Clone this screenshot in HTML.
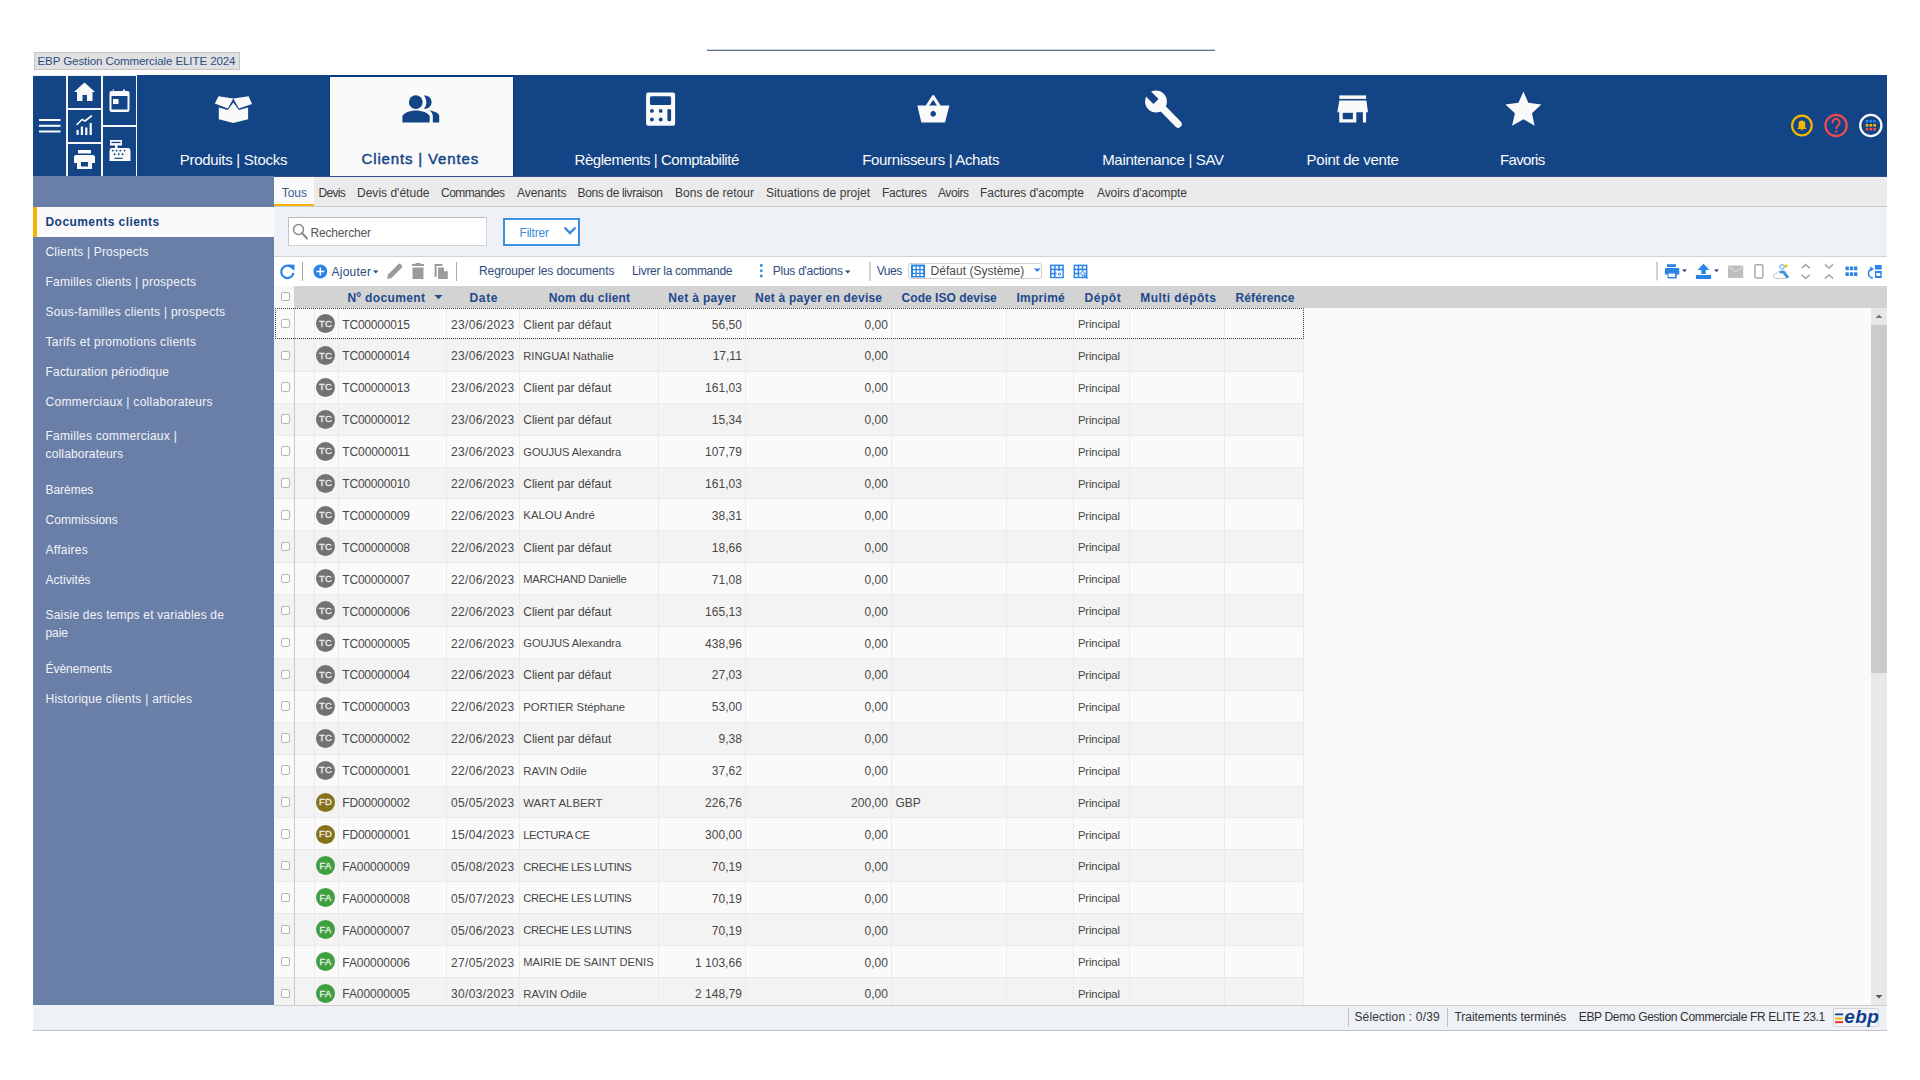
<!DOCTYPE html><html><head><meta charset="utf-8"><style>
*{box-sizing:border-box;margin:0;padding:0}
html,body{width:1920px;height:1080px;overflow:hidden;background:#fff;font-family:"Liberation Sans",sans-serif;position:relative}
.t{position:absolute;white-space:nowrap}
.r{position:absolute}
svg{position:absolute;overflow:visible}
</style></head><body>
<div class="r" style="left:34px;top:52px;width:206px;height:18px;background:#e0e0e0;border:1px solid #c4c4c4;"></div>
<div class="t" style="font-size:11.5px;line-height:11.5px;color:#2b4d82;top:55.77px;letter-spacing:-0.076px;left:37.50px;">EBP Gestion Commerciale ELITE 2024</div>
<div class="r" style="left:707px;top:49px;width:508px;height:1px;background:#c8d8ee;"></div>
<div class="r" style="left:707px;top:50px;width:508px;height:1px;background:#6a6d72;"></div>
<div class="r" style="left:33px;top:75px;width:1854px;height:101px;background:#134486;"></div>
<div class="r" style="left:33px;top:75px;width:104px;height:1px;background:#e8edf5;"></div>
<div class="r" style="left:33px;top:175.5px;width:104px;height:1px;background:#e8edf5;"></div>
<div class="r" style="left:66px;top:75px;width:2px;height:101px;background:#f4f6fa;"></div>
<div class="r" style="left:101px;top:75px;width:2px;height:101px;background:#f4f6fa;"></div>
<div class="r" style="left:136px;top:75px;width:1px;height:101px;background:#f4f6fa;"></div>
<div class="r" style="left:68px;top:107.5px;width:33px;height:2.5px;background:#f4f6fa;"></div>
<div class="r" style="left:68px;top:141.5px;width:33px;height:2.5px;background:#f4f6fa;"></div>
<div class="r" style="left:103px;top:124.5px;width:33px;height:2.5px;background:#f4f6fa;"></div>
<div class="r" style="left:330px;top:75px;width:182.5px;height:101px;background:#fafafa;"></div>
<div class="r" style="left:329px;top:75px;width:184.5px;height:2px;background:#0a3b80;"></div>
<div class="r" style="left:329px;top:75px;width:1px;height:101px;background:#0a3b80;"></div>
<div class="r" style="left:512.5px;top:75px;width:1px;height:101px;background:#0a3b80;"></div>
<svg style="left:0;top:0" width="1" height="1"><g fill="#fafafa"><rect x="39" y="119" width="21.5" height="2" /><rect x="39" y="124.8" width="21.5" height="2"/><rect x="39" y="130.5" width="21.5" height="2"/><path d="M84.5 82.5 L95 92 L92.5 92 L92.5 101 L87 101 L87 95 L82.5 95 L82.5 101 L77 101 L77 92 L74 92 Z"/><path d="M112 89.5 h2 v1.5 h9 v-1.5 h2 v1.5 h2.5 a2 2 0 0 1 2 2 v17 a2 2 0 0 1 -2 2 h-16 a2 2 0 0 1 -2 -2 v-17 a2 2 0 0 1 2 -2 h2.5 z M111.5 96 v13.5 h16 v-13.5 z"/><rect x="113" y="99" width="5.5" height="5"/><rect x="76.5" y="130" width="2.2" height="5"/><rect x="80.8" y="126.5" width="2.2" height="8.5"/><rect x="85.2" y="127.5" width="2.2" height="7.5"/><rect x="89.6" y="123" width="2.2" height="12"/><path d="M77 124.5 L82 119.5 L85 121 L91.5 116" fill="none" stroke="#fafafa" stroke-width="1.6" stroke-linecap="round" stroke-linejoin="round"/><rect x="78" y="150" width="13" height="3.5"/><path d="M76 155 h17 a2 2 0 0 1 2 2 v6 h-3 v6 h-15 v-6 h-3 v-6 a2 2 0 0 1 2 -2 z M81 162 v4.5 h7 v-4.5 z"/><rect x="110" y="140" width="12" height="5.5"/><rect x="115" y="145" width="2.5" height="3.5"/><path d="M111.5 148 h17 a1.5 1.5 0 0 1 1.4 1 l0.6 1.5 v10.5 h-21 v-10.5 l0.6 -1.5 a1.5 1.5 0 0 1 1.4 -1 z"/></g><g fill="#134486"><rect x="111.5" y="141.8" width="9" height="1.3"/><circle cx="112.8" cy="150.6" r="0.95"/><circle cx="116.5" cy="150.6" r="0.95"/><circle cx="120.3" cy="150.6" r="0.95"/><circle cx="124.5" cy="150.6" r="0.95"/><circle cx="114.6" cy="154.2" r="0.95"/><circle cx="118.7" cy="154.2" r="0.95"/><circle cx="122.6" cy="154.2" r="0.95"/><rect x="114.5" y="157.7" width="8" height="1.2"/></g></svg>
<svg style="left:0;top:0" width="1" height="1"><g fill="#fafafa"><path d="M214.8 103.5 L218.5 96.3 L233.3 98.4 L227.8 108.6 Z"/><path d="M233.3 98.4 L248.6 96.3 L252 104 L238.9 108.6 Z"/><path d="M218.8 107.5 L227.8 110 L233.3 102.6 L238.9 110 L248.1 107.5 L248.1 119.3 L233.3 123 L218.8 119.3 Z"/><path fill-rule="evenodd" d="M648.1 92.4 h25 a2 2 0 0 1 2 2 v29.3 a2 2 0 0 1 -2 2 h-25 a2 2 0 0 1 -2 -2 v-29.3 a2 2 0 0 1 2 -2 z M651.5 96.3 a1.5 1.5 0 0 0 -1.5 1.5 v5.6 a1.5 1.5 0 0 0 1.5 1.5 h18.1 a1.5 1.5 0 0 0 1.5 -1.5 v-5.6 a1.5 1.5 0 0 0 -1.5 -1.5 z"/></g><g fill="#134486"><circle cx="651.9" cy="110.9" r="1.9"/><circle cx="660.7" cy="110.9" r="1.9"/><circle cx="651.9" cy="119.5" r="1.9"/><circle cx="660.7" cy="119.5" r="1.9"/><rect x="667.4" y="109.1" width="3.7" height="12.2" rx="1.5"/></g><g fill="#fafafa"><path fill-rule="evenodd" d="M917.3 105.4 L925.8 105.4 L932 95.8 a1.4 1.4 0 0 1 2.4 0 L940.6 105.4 L949.4 105.4 L945 122.5 L921.4 122.5 Z M929.3 105.4 L937 105.4 L933.2 99.8 Z M933.2 111.1 a2.8 2.8 0 1 0 0.01 0 Z"/></g><g fill="#fafafa"><circle cx="1156" cy="101.5" r="10.9"/><path d="M1156 101.5 L1178 124" stroke="#fafafa" stroke-width="7.4" stroke-linecap="round"/></g><path d="M1158.55 98.95 L1153.45 104.05 L1140.5 91 L1145.6 85.9 Z" fill="#134486"/><g fill="#fafafa"><rect x="1339.3" y="95.4" width="26.8" height="3.5"/><path d="M1339.3 100.5 L1366.4 100.5 L1368 112.3 L1337.4 112.3 Z"/><path fill-rule="evenodd" d="M1339.3 112 h17 v10.5 h-17 z M1342.7 112.8 v6.5 h10.2 v-6.5 z"/><rect x="1362.9" y="112" width="3.2" height="10.5"/></g><g fill="#fafafa"><path d="M1523.5 91.5 L1528.3 102.8 L1541.3 104.4 L1532 113.2 L1534.6 125.7 L1523.5 119.3 L1512.1 125.7 L1514.9 113.2 L1505.4 104.4 L1518.4 102.8 Z"/></g><g fill="#134486"><circle cx="415.8" cy="102.1" r="6.9"/><path d="M423.9 95.6 a6.6 6.6 0 1 1 0 13 a9.5 9.5 0 0 0 0 -13 z"/><path d="M402.4 116 C403.5 112.8 410 110.4 416 110.4 C422 110.4 428.5 112.8 429.7 116 L429.7 122.5 L402.4 122.5 Z"/><path d="M429.5 110.6 C434 111.3 438.8 113 439.2 115.5 L439.2 122.5 L432.8 122.5 L432.8 116 C432.6 113.8 431.3 111.8 429.5 110.6 Z"/></g></svg>
<div class="t" style="font-size:15px;line-height:15px;color:#fafafa;top:151.60px;letter-spacing:-0.28px;left:179.70px;">Produits | Stocks</div>
<div class="t" style="font-size:15px;line-height:15px;color:#134486;top:151.30px;letter-spacing:0.843px;left:361.60px;-webkit-text-stroke:0.45px #134486;">Clients | Ventes</div>
<div class="t" style="font-size:15px;line-height:15px;color:#fafafa;top:151.60px;letter-spacing:-0.452px;left:574.50px;">Règlements | Comptabilité</div>
<div class="t" style="font-size:15px;line-height:15px;color:#fafafa;top:151.60px;letter-spacing:-0.343px;left:862.30px;">Fournisseurs | Achats</div>
<div class="t" style="font-size:15px;line-height:15px;color:#fafafa;top:151.60px;letter-spacing:-0.32px;left:1102.20px;">Maintenance | SAV</div>
<div class="t" style="font-size:15px;line-height:15px;color:#fafafa;top:151.60px;letter-spacing:-0.279px;left:1306.60px;">Point de vente</div>
<div class="t" style="font-size:15px;line-height:15px;color:#fafafa;top:151.60px;letter-spacing:-0.644px;left:1500.00px;">Favoris</div>
<svg style="left:0;top:0" width="1" height="1"><circle cx="1801.9" cy="125.5" r="9.8" fill="none" stroke="#f6b700" stroke-width="2.2"/><path d="M1801.9 120.5 a3.3 3.3 0 0 1 3.3 3.3 v3.5 l1.6 1.8 h-9.8 l1.6 -1.8 v-3.5 a3.3 3.3 0 0 1 3.3 -3.3 z M1800.8 129.3 h2.2 v1 h-2.2z" fill="#f6b700"/><circle cx="1836.1" cy="125.5" r="10.6" fill="none" stroke="#f04a4a" stroke-width="2.3"/><path d="M1832.5 122.5 a3.6 3.6 0 1 1 5.5 3 c-1.2 0.8 -1.6 1.5 -1.6 2.8" fill="none" stroke="#f04a4a" stroke-width="2" stroke-linecap="round"/><circle cx="1836.2" cy="131.5" r="1.2" fill="#f04a4a"/><circle cx="1870.8" cy="125.5" r="10.6" fill="none" stroke="#fafafa" stroke-width="2.3"/><g fill="#2d8ff0"><rect x="1865.8" y="120" width="2.4" height="2.4"/><rect x="1869.6" y="120" width="2.4" height="2.4"/><rect x="1873.4" y="120" width="2.4" height="2.4"/></g><g fill="#f6b700"><rect x="1865.8" y="124" width="2.6" height="2.6"/><rect x="1869.6" y="124" width="2.6" height="2.6"/><rect x="1873.4" y="124" width="2.6" height="2.6"/></g><g fill="#f04a4a"><rect x="1865.8" y="128" width="2.6" height="2.6"/><rect x="1869.6" y="128" width="2.6" height="2.6"/><rect x="1873.4" y="128" width="2.6" height="2.6"/></g></svg>
<div class="r" style="left:33px;top:176px;width:241px;height:829px;background:#6a7fa8;"></div>
<div class="r" style="left:33px;top:207px;width:241px;height:30px;background:#fafafa;"></div>
<div class="r" style="left:33px;top:207px;width:4px;height:30px;background:#f3b300;"></div>
<div class="t" style="font-size:12px;line-height:12px;color:#173f7e;top:215.64px;font-weight:bold;letter-spacing:0.44px;left:45.50px;">Documents clients</div>
<div class="t" style="font-size:12px;line-height:12px;color:#f2f4f8;top:246.14px;letter-spacing:0.177px;left:45.50px;">Clients | Prospects</div>
<div class="t" style="font-size:12px;line-height:12px;color:#f2f4f8;top:275.64px;letter-spacing:0.247px;left:45.50px;">Familles clients | prospects</div>
<div class="t" style="font-size:12px;line-height:12px;color:#f2f4f8;top:305.64px;letter-spacing:0.26px;left:45.50px;">Sous-familles clients | prospects</div>
<div class="t" style="font-size:12px;line-height:12px;color:#f2f4f8;top:335.64px;letter-spacing:0.313px;left:45.50px;">Tarifs et promotions clients</div>
<div class="t" style="font-size:12px;line-height:12px;color:#f2f4f8;top:365.64px;letter-spacing:0.195px;left:45.50px;">Facturation périodique</div>
<div class="t" style="font-size:12px;line-height:12px;color:#f2f4f8;top:395.64px;letter-spacing:0.29px;left:45.50px;">Commerciaux | collaborateurs</div>
<div class="t" style="font-size:12px;line-height:12px;color:#f2f4f8;top:430.34px;letter-spacing:0.259px;left:45.50px;">Familles commerciaux |</div>
<div class="t" style="font-size:12px;line-height:12px;color:#f2f4f8;top:447.84px;letter-spacing:0.162px;left:45.50px;">collaborateurs</div>
<div class="t" style="font-size:12px;line-height:12px;color:#f2f4f8;top:484.24px;letter-spacing:-0.038px;left:45.50px;">Barèmes</div>
<div class="t" style="font-size:12px;line-height:12px;color:#f2f4f8;top:514.34px;letter-spacing:0.03px;left:45.50px;">Commissions</div>
<div class="t" style="font-size:12px;line-height:12px;color:#f2f4f8;top:544.34px;letter-spacing:0.261px;left:45.50px;">Affaires</div>
<div class="t" style="font-size:12px;line-height:12px;color:#f2f4f8;top:574.24px;letter-spacing:0.054px;left:45.50px;">Activités</div>
<div class="t" style="font-size:12px;line-height:12px;color:#f2f4f8;top:609.24px;letter-spacing:0.182px;left:45.50px;">Saisie des temps et variables de</div>
<div class="t" style="font-size:12px;line-height:12px;color:#f2f4f8;top:626.64px;letter-spacing:-0.06px;left:45.50px;">paie</div>
<div class="t" style="font-size:12px;line-height:12px;color:#f2f4f8;top:663.14px;letter-spacing:-0.021px;left:45.50px;">Évènements</div>
<div class="t" style="font-size:12px;line-height:12px;color:#f2f4f8;top:693.14px;letter-spacing:0.262px;left:45.50px;">Historique clients | articles</div>
<div class="r" style="left:274px;top:176px;width:1613px;height:30px;background:#ebebeb;"></div>
<div class="r" style="left:274px;top:205.5px;width:1613px;height:1px;background:#c9c9c9;"></div>
<div class="r" style="left:274px;top:176px;width:40px;height:30px;background:#fafafa;"></div>
<div class="r" style="left:274px;top:176px;width:1613px;height:1px;background:#2f4f8a;"></div>
<div class="r" style="left:274px;top:204px;width:40px;height:2px;background:#f3b300;"></div>
<div class="t" style="font-size:12px;line-height:12px;color:#3a5b8c;top:186.84px;letter-spacing:-0.05px;left:281.80px;">Tous</div>
<div class="t" style="font-size:12px;line-height:12px;color:#3b3b3b;top:186.84px;letter-spacing:-0.675px;left:318.50px;">Devis</div>
<div class="t" style="font-size:12px;line-height:12px;color:#3b3b3b;top:186.84px;letter-spacing:0.014px;left:357.00px;">Devis d&#x27;étude</div>
<div class="t" style="font-size:12px;line-height:12px;color:#3b3b3b;top:186.84px;letter-spacing:-0.505px;left:441.00px;">Commandes</div>
<div class="t" style="font-size:12px;line-height:12px;color:#3b3b3b;top:186.84px;letter-spacing:-0.047px;left:517.00px;">Avenants</div>
<div class="t" style="font-size:12px;line-height:12px;color:#3b3b3b;top:186.84px;letter-spacing:-0.367px;left:577.50px;">Bons de livraison</div>
<div class="t" style="font-size:12px;line-height:12px;color:#3b3b3b;top:186.84px;letter-spacing:0.022px;left:675.00px;">Bons de retour</div>
<div class="t" style="font-size:12px;line-height:12px;color:#3b3b3b;top:186.84px;letter-spacing:0.066px;left:766.00px;">Situations de projet</div>
<div class="t" style="font-size:12px;line-height:12px;color:#3b3b3b;top:186.84px;letter-spacing:-0.24px;left:882.00px;">Factures</div>
<div class="t" style="font-size:12px;line-height:12px;color:#3b3b3b;top:186.84px;letter-spacing:-0.424px;left:938.00px;">Avoirs</div>
<div class="t" style="font-size:12px;line-height:12px;color:#3b3b3b;top:186.84px;letter-spacing:-0.059px;left:980.00px;">Factures d&#x27;acompte</div>
<div class="t" style="font-size:12px;line-height:12px;color:#3b3b3b;top:186.84px;letter-spacing:-0.096px;left:1097.00px;">Avoirs d&#x27;acompte</div>
<div class="r" style="left:274px;top:206.5px;width:1613px;height:50px;background:#eef1f5;"></div>
<div class="r" style="left:274px;top:256px;width:1613px;height:1px;background:#d2d2d2;"></div>
<div class="r" style="left:287.5px;top:217px;width:199px;height:28.5px;background:#fff;border:1px solid #d4d4d4;border-top-color:#b9b9b9;border-left-color:#c2c2c2;"></div>
<svg style="left:0;top:0" width="1" height="1"><circle cx="298.5" cy="229.5" r="5" fill="none" stroke="#8a8a8a" stroke-width="1.5"/><path d="M302 233 L307 238.5" stroke="#8a8a8a" stroke-width="2" stroke-linecap="round"/></svg>
<div class="t" style="font-size:12px;line-height:12px;color:#555;top:226.84px;letter-spacing:-0.171px;left:310.50px;">Rechercher</div>
<div class="r" style="left:503.3px;top:217.5px;width:77.2px;height:28px;background:#fff;border:2px solid #3f8ee0;"></div>
<div class="t" style="font-size:12px;line-height:12px;color:#3c8ad8;top:226.84px;letter-spacing:-0.193px;left:519.50px;">Filtrer</div>
<svg style="left:0;top:0" width="1" height="1"><path d="M564.5 227.5 L570 233 L575.5 227.5" fill="none" stroke="#3c8ad8" stroke-width="2.4"/></svg>
<div class="r" style="left:274px;top:257px;width:1613px;height:29px;background:#fff;"></div>
<div class="r" style="left:274px;top:285.5px;width:1613px;height:1px;background:#e6e6e6;"></div>
<svg style="left:0;top:0" width="1" height="1"><path d="M292.3 268 A6.2 6.2 0 1 0 293.5 273" fill="none" stroke="#2a84e6" stroke-width="2.2"/><path d="M288 264.5 L294.6 264.7 L294.3 271 Z" fill="#2a84e6"/><rect x="302" y="262" width="1" height="19" fill="#a8a8a8"/><circle cx="320.3" cy="271.5" r="6.9" fill="#2a84e6"/><path d="M320.3 267.5 v8 M316.3 271.5 h8" stroke="#fff" stroke-width="1.6"/><path d="M373 270.5 h5.5 l-2.75 3 z" fill="#2d4b7b"/><path d="M387 279 L388 274.5 L398.5 264 a1.4 1.4 0 0 1 2 0 L402 265.5 a1.4 1.4 0 0 1 0 2 L391.5 278 Z" fill="#9b9b9b"/><rect x="412" y="264" width="12" height="2" fill="#9b9b9b"/><rect x="415.5" y="263" width="5" height="1.5" fill="#9b9b9b"/><rect x="412.5" y="267.5" width="11" height="11.5" fill="#9b9b9b"/><path d="M434.6 264 h8 v2 h-6 v11 h-2 z" fill="#9b9b9b"/><path d="M438 267.5 h6 l3.75 3.75 v7.75 h-9.75 z" fill="#9b9b9b"/><path d="M444 267.5 v3.75 h3.75" fill="#fff"/><rect x="456" y="262" width="1" height="19" fill="#a8a8a8"/><circle cx="761.3" cy="265.5" r="1.4" fill="#2a84e6"/><circle cx="761.3" cy="270.8" r="1.4" fill="#2a84e6"/><circle cx="761.3" cy="276" r="1.4" fill="#2a84e6"/><path d="M845 270.5 h5.5 l-2.75 3 z" fill="#2d4b7b"/><rect x="869.5" y="262" width="1" height="19" fill="#a8a8a8"/></svg>
<div class="t" style="font-size:12px;line-height:12px;color:#2d4b7b;top:265.84px;letter-spacing:0.232px;left:331.50px;">Ajouter</div>
<div class="t" style="font-size:12px;line-height:12px;color:#2d4b7b;top:265.14px;letter-spacing:-0.091px;left:479.00px;">Regrouper les documents</div>
<div class="t" style="font-size:12px;line-height:12px;color:#2d4b7b;top:265.14px;letter-spacing:-0.282px;left:631.90px;">Livrer la commande</div>
<div class="t" style="font-size:12px;line-height:12px;color:#2d4b7b;top:265.14px;letter-spacing:-0.268px;left:772.80px;">Plus d&#x27;actions</div>
<div class="t" style="font-size:12px;line-height:12px;color:#2d4b7b;top:265.14px;letter-spacing:-0.47px;left:876.70px;">Vues</div>
<div class="r" style="left:907.7px;top:263px;width:134px;height:16px;background:#fff;border:1px solid #cfcfcf;border-radius:2px;"></div>
<div class="t" style="font-size:12px;line-height:12px;color:#4a4a4a;top:265.14px;letter-spacing:0.029px;left:930.50px;">Défaut (Système)</div>
<svg style="left:0;top:0" width="1" height="1"><g fill="#2a84e6"><rect x="911" y="264.5" width="14" height="13"/></g><g fill="#fff"><rect x="913" y="266.5" width="2.5" height="2.5"/><rect x="916.8" y="266.5" width="2.5" height="2.5"/><rect x="920.6" y="266.5" width="2.5" height="2.5"/><rect x="913" y="270.3" width="2.5" height="2.5"/><rect x="916.8" y="270.3" width="2.5" height="2.5"/><rect x="920.6" y="270.3" width="2.5" height="2.5"/><rect x="913" y="274" width="2.5" height="2"/><rect x="916.8" y="274" width="2.5" height="2"/><rect x="920.6" y="274" width="2.5" height="2"/></g><path d="M1034 268.5 h6.5 l-3.25 3.5 z" fill="#2a84e6"/><rect x="1050" y="264.6" width="13.8" height="13.6" fill="#2a84e6"/><g fill="#fff"><rect x="1051.5" y="266.1" width="2.6" height="2.6"/><rect x="1055.6" y="266.1" width="2.6" height="2.6"/><rect x="1059.7" y="266.1" width="2.6" height="2.6"/><rect x="1051.5" y="270.2" width="2.6" height="2.6"/><rect x="1055.6" y="270.2" width="2.6" height="2.6"/><rect x="1059.7" y="270.2" width="2.6" height="2.6"/><rect x="1051.5" y="274.3" width="2.6" height="2.6"/><rect x="1055.6" y="274.3" width="2.6" height="2.6"/><rect x="1059.7" y="274.3" width="2.6" height="2.6"/></g><circle cx="1059.5" cy="274" r="3" fill="#fff"/><circle cx="1059.5" cy="274" r="1.6" fill="#2a84e6"/><circle cx="1059.5" cy="274" r="0.7" fill="#fff"/><rect x="1073.6" y="264.6" width="13.8" height="13.6" fill="#2a84e6"/><g fill="#fff"><rect x="1075.1" y="266.1" width="2.6" height="2.6"/><rect x="1079.2" y="266.1" width="2.6" height="2.6"/><rect x="1083.3" y="266.1" width="2.6" height="2.6"/><rect x="1075.1" y="270.2" width="2.6" height="2.6"/><rect x="1079.2" y="270.2" width="2.6" height="2.6"/><rect x="1083.3" y="270.2" width="2.6" height="2.6"/><rect x="1075.1" y="274.3" width="2.6" height="2.6"/><rect x="1079.2" y="274.3" width="2.6" height="2.6"/><rect x="1083.3" y="274.3" width="2.6" height="2.6"/></g><circle cx="1082.5" cy="273.5" r="2.8" fill="#fff"/><circle cx="1082.5" cy="273.5" r="1.8" fill="none" stroke="#2a84e6" stroke-width="1"/><path d="M1084 275 L1087.5 278.5" stroke="#2a84e6" stroke-width="1.5"/><rect x="1656.5" y="262" width="1" height="18.5" fill="#a8a8a8"/><g fill="#2a84e6"><rect x="1667" y="264.2" width="9" height="2.8"/><path d="M1665.5 268 h12.5 a1.3 1.3 0 0 1 1.3 1.3 v5.2 h-2.6 v3.9 h-9.2 v-3.9 h-2.6 v-5.2 a1.3 1.3 0 0 1 1.3 -1.3 z"/></g><rect x="1668.5" y="273.5" width="6.5" height="3.5" fill="#fff"/><path d="M1682 269.5 h5 l-2.5 2.6 z" fill="#17386b"/><g fill="#2a84e6"><path d="M1703.5 263.8 L1709.5 270 h-3.8 v4 h-4.4 v-4 h-3.8 z"/><rect x="1695.9" y="275" width="15.2" height="4"/></g><path d="M1714 269.5 h5 l-2.5 2.6 z" fill="#17386b"/><rect x="1728" y="265.5" width="15.2" height="12.4" fill="#bdbdbd"/><path d="M1728.5 266.5 L1735.6 272 L1742.7 266.5" fill="none" stroke="#e6e6e6" stroke-width="1"/><rect x="1755" y="264.8" width="7.8" height="13.2" rx="1.3" fill="none" stroke="#a9a9a9" stroke-width="1.5"/><path d="M1775.2 278.6 a2.4 2.4 0 0 1 1.2 -4.8 a3.8 3.8 0 0 1 6.8 -0.6 a2.6 2.6 0 0 1 1.8 5.4 z" fill="#fdfdfd" stroke="#b5b5b5" stroke-width="0.8"/><path d="M1779.3 271.6 Q1781.5 270 1784.3 270.6 L1789.2 277 L1786.8 278.8 L1783 273.5 Q1781 273 1779.8 273.5 Z" fill="#3f92e3"/><circle cx="1782" cy="266.9" r="2.4" fill="#d4ebfa" stroke="#67a9e3" stroke-width="0.9"/><circle cx="1786" cy="265.8" r="1.6" fill="#f6be18"/><path d="M1801.6 268.2 L1805.7 264.6 L1809.8 268.2 M1801.6 274.8 L1805.7 278.4 L1809.8 274.8" fill="none" stroke="#a8a8a8" stroke-width="1.6"/><path d="M1824.9 264.4 L1829 268 L1833.1 264.4 M1824.9 278.6 L1829 275 L1833.1 278.6" fill="none" stroke="#a8a8a8" stroke-width="1.6"/><g fill="#2a84e6"><rect x="1845.5" y="266.5" width="3.3" height="3.7"/><rect x="1849.8" y="266.5" width="3.3" height="3.7"/><rect x="1854" y="266.5" width="3.3" height="3.7"/><rect x="1845.5" y="272.3" width="3.3" height="3.7"/><rect x="1849.8" y="272.3" width="3.3" height="3.7"/><rect x="1854" y="272.3" width="3.3" height="3.7"/></g><g fill="#2a84e6"><rect x="1875" y="265" width="6.7" height="4.5"/><rect x="1875" y="271" width="6.7" height="7"/></g><rect x="1876.3" y="273" width="4" height="3" fill="#fff"/><path d="M1872 269 a4.5 4.5 0 0 0 -3.5 4.5 a4.5 4.5 0 0 0 4.5 4.5" fill="none" stroke="#2a84e6" stroke-width="1.5"/><path d="M1870 266.5 L1874 269 L1870.5 271.5 z" fill="#2a84e6"/></svg>
<div class="r" style="left:274px;top:286px;width:1613px;height:22px;background:#d3d3d3;"></div>
<div class="r" style="left:274px;top:286px;width:20px;height:22px;background:#f8f8f8;"></div>
<div class="r" style="left:280.5px;top:291.5px;width:9.5px;height:9.5px;border:1.2px solid #b0b0b0;border-radius:2px;background:#fff"></div>
<div class="t" style="font-size:12px;line-height:12px;color:#21498c;top:291.84px;font-weight:bold;letter-spacing:0.379px;left:347.50px;">Nº document</div>
<div class="t" style="font-size:12px;line-height:12px;color:#21498c;top:291.84px;font-weight:bold;letter-spacing:0.663px;left:469.50px;">Date</div>
<div class="t" style="font-size:12px;line-height:12px;color:#21498c;top:291.84px;font-weight:bold;letter-spacing:0.158px;left:548.75px;">Nom du client</div>
<div class="t" style="font-size:12px;line-height:12px;color:#21498c;top:291.84px;font-weight:bold;letter-spacing:0.329px;left:668.25px;">Net à payer</div>
<div class="t" style="font-size:12px;line-height:12px;color:#21498c;top:291.84px;font-weight:bold;letter-spacing:0.208px;left:755.10px;">Net à payer en devise</div>
<div class="t" style="font-size:12px;line-height:12px;color:#21498c;top:291.84px;font-weight:bold;letter-spacing:0.035px;left:901.60px;">Code ISO devise</div>
<div class="t" style="font-size:12px;line-height:12px;color:#21498c;top:291.84px;font-weight:bold;letter-spacing:0.287px;left:1016.40px;">Imprimé</div>
<div class="t" style="font-size:12px;line-height:12px;color:#21498c;top:291.84px;font-weight:bold;letter-spacing:0.577px;left:1084.40px;">Dépôt</div>
<div class="t" style="font-size:12px;line-height:12px;color:#21498c;top:291.84px;font-weight:bold;letter-spacing:0.441px;left:1140.30px;">Multi dépôts</div>
<div class="t" style="font-size:12px;line-height:12px;color:#21498c;top:291.84px;font-weight:bold;letter-spacing:0.11px;left:1235.50px;">Référence</div>
<svg style="left:0;top:0" width="1" height="1"><path d="M434.5 295 h8 l-4 4.2 z" fill="#21498c"/></svg>
<div class="r" style="left:274px;top:308px;width:1597px;height:697px;background:#fafafa;"></div>
<div class="r" style="left:274px;top:308px;width:1597px;height:697px;overflow:hidden">
<div class="r" style="left:0.00px;top:0.00px;width:1030px;height:32px;background:#fafafa;"></div><div class="r" style="left:0.00px;top:32.00px;width:1030px;height:32px;background:#f3f3f3;"></div><div class="r" style="left:0.00px;top:64.00px;width:1030px;height:32px;background:#fafafa;"></div><div class="r" style="left:0.00px;top:96.00px;width:1030px;height:32px;background:#f3f3f3;"></div><div class="r" style="left:0.00px;top:128.00px;width:1030px;height:32px;background:#fafafa;"></div><div class="r" style="left:0.00px;top:160.00px;width:1030px;height:31px;background:#f3f3f3;"></div><div class="r" style="left:0.00px;top:191.00px;width:1030px;height:32px;background:#fafafa;"></div><div class="r" style="left:0.00px;top:223.00px;width:1030px;height:32px;background:#f3f3f3;"></div><div class="r" style="left:0.00px;top:255.00px;width:1030px;height:32px;background:#fafafa;"></div><div class="r" style="left:0.00px;top:287.00px;width:1030px;height:32px;background:#f3f3f3;"></div><div class="r" style="left:0.00px;top:319.00px;width:1030px;height:32px;background:#fafafa;"></div><div class="r" style="left:0.00px;top:351.00px;width:1030px;height:32px;background:#f3f3f3;"></div><div class="r" style="left:0.00px;top:383.00px;width:1030px;height:32px;background:#fafafa;"></div><div class="r" style="left:0.00px;top:415.00px;width:1030px;height:32px;background:#f3f3f3;"></div><div class="r" style="left:0.00px;top:447.00px;width:1030px;height:32px;background:#fafafa;"></div><div class="r" style="left:0.00px;top:479.00px;width:1030px;height:31px;background:#f3f3f3;"></div><div class="r" style="left:0.00px;top:510.00px;width:1030px;height:32px;background:#fafafa;"></div><div class="r" style="left:0.00px;top:542.00px;width:1030px;height:32px;background:#f3f3f3;"></div><div class="r" style="left:0.00px;top:574.00px;width:1030px;height:32px;background:#fafafa;"></div><div class="r" style="left:0.00px;top:606.00px;width:1030px;height:32px;background:#f3f3f3;"></div><div class="r" style="left:0.00px;top:638.00px;width:1030px;height:32px;background:#fafafa;"></div><div class="r" style="left:0.00px;top:670.00px;width:1030px;height:32px;background:#f3f3f3;"></div><div class="r" style="left:0.00px;top:31.00px;width:1030px;height:1px;background:#ebebeb;"></div><div class="r" style="left:0.00px;top:63.00px;width:1030px;height:1px;background:#ebebeb;"></div><div class="r" style="left:0.00px;top:95.00px;width:1030px;height:1px;background:#ebebeb;"></div><div class="r" style="left:0.00px;top:127.00px;width:1030px;height:1px;background:#ebebeb;"></div><div class="r" style="left:0.00px;top:159.00px;width:1030px;height:1px;background:#ebebeb;"></div><div class="r" style="left:0.00px;top:190.00px;width:1030px;height:1px;background:#ebebeb;"></div><div class="r" style="left:0.00px;top:222.00px;width:1030px;height:1px;background:#ebebeb;"></div><div class="r" style="left:0.00px;top:254.00px;width:1030px;height:1px;background:#ebebeb;"></div><div class="r" style="left:0.00px;top:286.00px;width:1030px;height:1px;background:#ebebeb;"></div><div class="r" style="left:0.00px;top:318.00px;width:1030px;height:1px;background:#ebebeb;"></div><div class="r" style="left:0.00px;top:350.00px;width:1030px;height:1px;background:#ebebeb;"></div><div class="r" style="left:0.00px;top:382.00px;width:1030px;height:1px;background:#ebebeb;"></div><div class="r" style="left:0.00px;top:414.00px;width:1030px;height:1px;background:#ebebeb;"></div><div class="r" style="left:0.00px;top:446.00px;width:1030px;height:1px;background:#ebebeb;"></div><div class="r" style="left:0.00px;top:478.00px;width:1030px;height:1px;background:#ebebeb;"></div><div class="r" style="left:0.00px;top:509.00px;width:1030px;height:1px;background:#ebebeb;"></div><div class="r" style="left:0.00px;top:541.00px;width:1030px;height:1px;background:#ebebeb;"></div><div class="r" style="left:0.00px;top:573.00px;width:1030px;height:1px;background:#ebebeb;"></div><div class="r" style="left:0.00px;top:605.00px;width:1030px;height:1px;background:#ebebeb;"></div><div class="r" style="left:0.00px;top:637.00px;width:1030px;height:1px;background:#ebebeb;"></div><div class="r" style="left:0.00px;top:669.00px;width:1030px;height:1px;background:#ebebeb;"></div><div class="r" style="left:0.00px;top:701.00px;width:1030px;height:1px;background:#ebebeb;"></div><div class="r" style="left:6.50px;top:10.60px;width:9.5px;height:9.5px;background:#fff;border:1.2px solid #b5b5b5;border-radius:2px;"></div><div class="r" style="left:41.50px;top:6.10px;width:19px;height:19px;background:#727272;border-radius:50%;"></div><div class="t" style="font-size:9.4px;line-height:9.4px;color:#eeeeee;top:10.64px;letter-spacing:0.1px;left:1.45px;width:100px;text-align:center;-webkit-text-stroke:0.3px #eeeeee;">TC</div><div class="t" style="font-size:12px;line-height:12px;color:#474747;top:10.54px;letter-spacing:-0.199px;left:68.30px;">TC00000015</div><div class="t" style="font-size:12px;line-height:12px;color:#474747;top:10.54px;letter-spacing:0.338px;left:177.10px;">23/06/2023</div><div class="t" style="font-size:11.99px;line-height:11.99px;color:#474747;top:10.55px;letter-spacing:0.001px;left:249.30px;">Client par défaut</div><div class="t" style="font-size:12px;line-height:12px;color:#474747;top:10.54px;right:1129.20px;text-align:right;">56,50</div><div class="t" style="font-size:12px;line-height:12px;color:#474747;top:10.54px;right:983.20px;text-align:right;">0,00</div><div class="t" style="font-size:11.3px;line-height:11.3px;color:#474747;top:11.13px;letter-spacing:-0.167px;left:804.00px;">Principal</div><div class="r" style="left:6.50px;top:42.50px;width:9.5px;height:9.5px;background:#fff;border:1.2px solid #b5b5b5;border-radius:2px;"></div><div class="r" style="left:41.50px;top:38.00px;width:19px;height:19px;background:#727272;border-radius:50%;"></div><div class="t" style="font-size:9.4px;line-height:9.4px;color:#eeeeee;top:42.54px;letter-spacing:0.1px;left:1.45px;width:100px;text-align:center;-webkit-text-stroke:0.3px #eeeeee;">TC</div><div class="t" style="font-size:12px;line-height:12px;color:#474747;top:42.44px;letter-spacing:-0.199px;left:68.30px;">TC00000014</div><div class="t" style="font-size:12px;line-height:12px;color:#474747;top:42.44px;letter-spacing:0.338px;left:177.10px;">23/06/2023</div><div class="t" style="font-size:11.2px;line-height:11.2px;color:#474747;top:43.12px;letter-spacing:-0.026px;left:249.30px;">RINGUAI Nathalie</div><div class="t" style="font-size:12px;line-height:12px;color:#474747;top:42.44px;right:1129.20px;text-align:right;">17,11</div><div class="t" style="font-size:12px;line-height:12px;color:#474747;top:42.44px;right:983.20px;text-align:right;">0,00</div><div class="t" style="font-size:11.3px;line-height:11.3px;color:#474747;top:43.03px;letter-spacing:-0.167px;left:804.00px;">Principal</div><div class="r" style="left:6.50px;top:74.40px;width:9.5px;height:9.5px;background:#fff;border:1.2px solid #b5b5b5;border-radius:2px;"></div><div class="r" style="left:41.50px;top:69.90px;width:19px;height:19px;background:#727272;border-radius:50%;"></div><div class="t" style="font-size:9.4px;line-height:9.4px;color:#eeeeee;top:74.44px;letter-spacing:0.1px;left:1.45px;width:100px;text-align:center;-webkit-text-stroke:0.3px #eeeeee;">TC</div><div class="t" style="font-size:12px;line-height:12px;color:#474747;top:74.34px;letter-spacing:-0.199px;left:68.30px;">TC00000013</div><div class="t" style="font-size:12px;line-height:12px;color:#474747;top:74.34px;letter-spacing:0.338px;left:177.10px;">23/06/2023</div><div class="t" style="font-size:11.99px;line-height:11.99px;color:#474747;top:74.35px;letter-spacing:0.001px;left:249.30px;">Client par défaut</div><div class="t" style="font-size:12px;line-height:12px;color:#474747;top:74.34px;right:1129.20px;text-align:right;">161,03</div><div class="t" style="font-size:12px;line-height:12px;color:#474747;top:74.34px;right:983.20px;text-align:right;">0,00</div><div class="t" style="font-size:11.3px;line-height:11.3px;color:#474747;top:74.93px;letter-spacing:-0.167px;left:804.00px;">Principal</div><div class="r" style="left:6.50px;top:106.30px;width:9.5px;height:9.5px;background:#fff;border:1.2px solid #b5b5b5;border-radius:2px;"></div><div class="r" style="left:41.50px;top:101.80px;width:19px;height:19px;background:#727272;border-radius:50%;"></div><div class="t" style="font-size:9.4px;line-height:9.4px;color:#eeeeee;top:106.34px;letter-spacing:0.1px;left:1.45px;width:100px;text-align:center;-webkit-text-stroke:0.3px #eeeeee;">TC</div><div class="t" style="font-size:12px;line-height:12px;color:#474747;top:106.24px;letter-spacing:-0.199px;left:68.30px;">TC00000012</div><div class="t" style="font-size:12px;line-height:12px;color:#474747;top:106.24px;letter-spacing:0.338px;left:177.10px;">23/06/2023</div><div class="t" style="font-size:11.99px;line-height:11.99px;color:#474747;top:106.25px;letter-spacing:0.001px;left:249.30px;">Client par défaut</div><div class="t" style="font-size:12px;line-height:12px;color:#474747;top:106.24px;right:1129.20px;text-align:right;">15,34</div><div class="t" style="font-size:12px;line-height:12px;color:#474747;top:106.24px;right:983.20px;text-align:right;">0,00</div><div class="t" style="font-size:11.3px;line-height:11.3px;color:#474747;top:106.83px;letter-spacing:-0.167px;left:804.00px;">Principal</div><div class="r" style="left:6.50px;top:138.20px;width:9.5px;height:9.5px;background:#fff;border:1.2px solid #b5b5b5;border-radius:2px;"></div><div class="r" style="left:41.50px;top:133.70px;width:19px;height:19px;background:#727272;border-radius:50%;"></div><div class="t" style="font-size:9.4px;line-height:9.4px;color:#eeeeee;top:138.24px;letter-spacing:0.1px;left:1.45px;width:100px;text-align:center;-webkit-text-stroke:0.3px #eeeeee;">TC</div><div class="t" style="font-size:12px;line-height:12px;color:#474747;top:138.14px;letter-spacing:-0.099px;left:68.30px;">TC00000011</div><div class="t" style="font-size:12px;line-height:12px;color:#474747;top:138.14px;letter-spacing:0.338px;left:177.10px;">23/06/2023</div><div class="t" style="font-size:11.2px;line-height:11.2px;color:#474747;top:138.82px;letter-spacing:-0.108px;left:249.30px;">GOUJUS Alexandra</div><div class="t" style="font-size:12px;line-height:12px;color:#474747;top:138.14px;right:1129.20px;text-align:right;">107,79</div><div class="t" style="font-size:12px;line-height:12px;color:#474747;top:138.14px;right:983.20px;text-align:right;">0,00</div><div class="t" style="font-size:11.3px;line-height:11.3px;color:#474747;top:138.73px;letter-spacing:-0.167px;left:804.00px;">Principal</div><div class="r" style="left:6.50px;top:170.10px;width:9.5px;height:9.5px;background:#fff;border:1.2px solid #b5b5b5;border-radius:2px;"></div><div class="r" style="left:41.50px;top:165.60px;width:19px;height:19px;background:#727272;border-radius:50%;"></div><div class="t" style="font-size:9.4px;line-height:9.4px;color:#eeeeee;top:170.14px;letter-spacing:0.1px;left:1.45px;width:100px;text-align:center;-webkit-text-stroke:0.3px #eeeeee;">TC</div><div class="t" style="font-size:12px;line-height:12px;color:#474747;top:170.04px;letter-spacing:-0.199px;left:68.30px;">TC00000010</div><div class="t" style="font-size:12px;line-height:12px;color:#474747;top:170.04px;letter-spacing:0.338px;left:177.10px;">22/06/2023</div><div class="t" style="font-size:11.99px;line-height:11.99px;color:#474747;top:170.05px;letter-spacing:0.001px;left:249.30px;">Client par défaut</div><div class="t" style="font-size:12px;line-height:12px;color:#474747;top:170.04px;right:1129.20px;text-align:right;">161,03</div><div class="t" style="font-size:12px;line-height:12px;color:#474747;top:170.04px;right:983.20px;text-align:right;">0,00</div><div class="t" style="font-size:11.3px;line-height:11.3px;color:#474747;top:170.63px;letter-spacing:-0.167px;left:804.00px;">Principal</div><div class="r" style="left:6.50px;top:202.00px;width:9.5px;height:9.5px;background:#fff;border:1.2px solid #b5b5b5;border-radius:2px;"></div><div class="r" style="left:41.50px;top:197.50px;width:19px;height:19px;background:#727272;border-radius:50%;"></div><div class="t" style="font-size:9.4px;line-height:9.4px;color:#eeeeee;top:202.04px;letter-spacing:0.1px;left:1.45px;width:100px;text-align:center;-webkit-text-stroke:0.3px #eeeeee;">TC</div><div class="t" style="font-size:12px;line-height:12px;color:#474747;top:201.94px;letter-spacing:-0.199px;left:68.30px;">TC00000009</div><div class="t" style="font-size:12px;line-height:12px;color:#474747;top:201.94px;letter-spacing:0.338px;left:177.10px;">22/06/2023</div><div class="t" style="font-size:11.41px;line-height:11.41px;color:#474747;top:202.44px;letter-spacing:0.002px;left:249.30px;">KALOU André</div><div class="t" style="font-size:12px;line-height:12px;color:#474747;top:201.94px;right:1129.20px;text-align:right;">38,31</div><div class="t" style="font-size:12px;line-height:12px;color:#474747;top:201.94px;right:983.20px;text-align:right;">0,00</div><div class="t" style="font-size:11.3px;line-height:11.3px;color:#474747;top:202.53px;letter-spacing:-0.167px;left:804.00px;">Principal</div><div class="r" style="left:6.50px;top:233.90px;width:9.5px;height:9.5px;background:#fff;border:1.2px solid #b5b5b5;border-radius:2px;"></div><div class="r" style="left:41.50px;top:229.40px;width:19px;height:19px;background:#727272;border-radius:50%;"></div><div class="t" style="font-size:9.4px;line-height:9.4px;color:#eeeeee;top:233.94px;letter-spacing:0.1px;left:1.45px;width:100px;text-align:center;-webkit-text-stroke:0.3px #eeeeee;">TC</div><div class="t" style="font-size:12px;line-height:12px;color:#474747;top:233.84px;letter-spacing:-0.199px;left:68.30px;">TC00000008</div><div class="t" style="font-size:12px;line-height:12px;color:#474747;top:233.84px;letter-spacing:0.338px;left:177.10px;">22/06/2023</div><div class="t" style="font-size:11.99px;line-height:11.99px;color:#474747;top:233.85px;letter-spacing:0.001px;left:249.30px;">Client par défaut</div><div class="t" style="font-size:12px;line-height:12px;color:#474747;top:233.84px;right:1129.20px;text-align:right;">18,66</div><div class="t" style="font-size:12px;line-height:12px;color:#474747;top:233.84px;right:983.20px;text-align:right;">0,00</div><div class="t" style="font-size:11.3px;line-height:11.3px;color:#474747;top:234.43px;letter-spacing:-0.167px;left:804.00px;">Principal</div><div class="r" style="left:6.50px;top:265.80px;width:9.5px;height:9.5px;background:#fff;border:1.2px solid #b5b5b5;border-radius:2px;"></div><div class="r" style="left:41.50px;top:261.30px;width:19px;height:19px;background:#727272;border-radius:50%;"></div><div class="t" style="font-size:9.4px;line-height:9.4px;color:#eeeeee;top:265.84px;letter-spacing:0.1px;left:1.45px;width:100px;text-align:center;-webkit-text-stroke:0.3px #eeeeee;">TC</div><div class="t" style="font-size:12px;line-height:12px;color:#474747;top:265.74px;letter-spacing:-0.199px;left:68.30px;">TC00000007</div><div class="t" style="font-size:12px;line-height:12px;color:#474747;top:265.74px;letter-spacing:0.338px;left:177.10px;">22/06/2023</div><div class="t" style="font-size:11.2px;line-height:11.2px;color:#474747;top:266.42px;letter-spacing:-0.3px;left:249.30px;">MARCHAND Danielle</div><div class="t" style="font-size:12px;line-height:12px;color:#474747;top:265.74px;right:1129.20px;text-align:right;">71,08</div><div class="t" style="font-size:12px;line-height:12px;color:#474747;top:265.74px;right:983.20px;text-align:right;">0,00</div><div class="t" style="font-size:11.3px;line-height:11.3px;color:#474747;top:266.33px;letter-spacing:-0.167px;left:804.00px;">Principal</div><div class="r" style="left:6.50px;top:297.70px;width:9.5px;height:9.5px;background:#fff;border:1.2px solid #b5b5b5;border-radius:2px;"></div><div class="r" style="left:41.50px;top:293.20px;width:19px;height:19px;background:#727272;border-radius:50%;"></div><div class="t" style="font-size:9.4px;line-height:9.4px;color:#eeeeee;top:297.74px;letter-spacing:0.1px;left:1.45px;width:100px;text-align:center;-webkit-text-stroke:0.3px #eeeeee;">TC</div><div class="t" style="font-size:12px;line-height:12px;color:#474747;top:297.64px;letter-spacing:-0.199px;left:68.30px;">TC00000006</div><div class="t" style="font-size:12px;line-height:12px;color:#474747;top:297.64px;letter-spacing:0.338px;left:177.10px;">22/06/2023</div><div class="t" style="font-size:11.99px;line-height:11.99px;color:#474747;top:297.65px;letter-spacing:0.001px;left:249.30px;">Client par défaut</div><div class="t" style="font-size:12px;line-height:12px;color:#474747;top:297.64px;right:1129.20px;text-align:right;">165,13</div><div class="t" style="font-size:12px;line-height:12px;color:#474747;top:297.64px;right:983.20px;text-align:right;">0,00</div><div class="t" style="font-size:11.3px;line-height:11.3px;color:#474747;top:298.23px;letter-spacing:-0.167px;left:804.00px;">Principal</div><div class="r" style="left:6.50px;top:329.60px;width:9.5px;height:9.5px;background:#fff;border:1.2px solid #b5b5b5;border-radius:2px;"></div><div class="r" style="left:41.50px;top:325.10px;width:19px;height:19px;background:#727272;border-radius:50%;"></div><div class="t" style="font-size:9.4px;line-height:9.4px;color:#eeeeee;top:329.64px;letter-spacing:0.1px;left:1.45px;width:100px;text-align:center;-webkit-text-stroke:0.3px #eeeeee;">TC</div><div class="t" style="font-size:12px;line-height:12px;color:#474747;top:329.54px;letter-spacing:-0.199px;left:68.30px;">TC00000005</div><div class="t" style="font-size:12px;line-height:12px;color:#474747;top:329.54px;letter-spacing:0.338px;left:177.10px;">22/06/2023</div><div class="t" style="font-size:11.2px;line-height:11.2px;color:#474747;top:330.22px;letter-spacing:-0.108px;left:249.30px;">GOUJUS Alexandra</div><div class="t" style="font-size:12px;line-height:12px;color:#474747;top:329.54px;right:1129.20px;text-align:right;">438,96</div><div class="t" style="font-size:12px;line-height:12px;color:#474747;top:329.54px;right:983.20px;text-align:right;">0,00</div><div class="t" style="font-size:11.3px;line-height:11.3px;color:#474747;top:330.13px;letter-spacing:-0.167px;left:804.00px;">Principal</div><div class="r" style="left:6.50px;top:361.50px;width:9.5px;height:9.5px;background:#fff;border:1.2px solid #b5b5b5;border-radius:2px;"></div><div class="r" style="left:41.50px;top:357.00px;width:19px;height:19px;background:#727272;border-radius:50%;"></div><div class="t" style="font-size:9.4px;line-height:9.4px;color:#eeeeee;top:361.54px;letter-spacing:0.1px;left:1.45px;width:100px;text-align:center;-webkit-text-stroke:0.3px #eeeeee;">TC</div><div class="t" style="font-size:12px;line-height:12px;color:#474747;top:361.44px;letter-spacing:-0.199px;left:68.30px;">TC00000004</div><div class="t" style="font-size:12px;line-height:12px;color:#474747;top:361.44px;letter-spacing:0.338px;left:177.10px;">22/06/2023</div><div class="t" style="font-size:11.99px;line-height:11.99px;color:#474747;top:361.45px;letter-spacing:0.001px;left:249.30px;">Client par défaut</div><div class="t" style="font-size:12px;line-height:12px;color:#474747;top:361.44px;right:1129.20px;text-align:right;">27,03</div><div class="t" style="font-size:12px;line-height:12px;color:#474747;top:361.44px;right:983.20px;text-align:right;">0,00</div><div class="t" style="font-size:11.3px;line-height:11.3px;color:#474747;top:362.03px;letter-spacing:-0.167px;left:804.00px;">Principal</div><div class="r" style="left:6.50px;top:393.40px;width:9.5px;height:9.5px;background:#fff;border:1.2px solid #b5b5b5;border-radius:2px;"></div><div class="r" style="left:41.50px;top:388.90px;width:19px;height:19px;background:#727272;border-radius:50%;"></div><div class="t" style="font-size:9.4px;line-height:9.4px;color:#eeeeee;top:393.44px;letter-spacing:0.1px;left:1.45px;width:100px;text-align:center;-webkit-text-stroke:0.3px #eeeeee;">TC</div><div class="t" style="font-size:12px;line-height:12px;color:#474747;top:393.34px;letter-spacing:-0.199px;left:68.30px;">TC00000003</div><div class="t" style="font-size:12px;line-height:12px;color:#474747;top:393.34px;letter-spacing:0.338px;left:177.10px;">22/06/2023</div><div class="t" style="font-size:11.33px;line-height:11.33px;color:#474747;top:393.91px;letter-spacing:-0.002px;left:249.30px;">PORTIER Stéphane</div><div class="t" style="font-size:12px;line-height:12px;color:#474747;top:393.34px;right:1129.20px;text-align:right;">53,00</div><div class="t" style="font-size:12px;line-height:12px;color:#474747;top:393.34px;right:983.20px;text-align:right;">0,00</div><div class="t" style="font-size:11.3px;line-height:11.3px;color:#474747;top:393.93px;letter-spacing:-0.167px;left:804.00px;">Principal</div><div class="r" style="left:6.50px;top:425.30px;width:9.5px;height:9.5px;background:#fff;border:1.2px solid #b5b5b5;border-radius:2px;"></div><div class="r" style="left:41.50px;top:420.80px;width:19px;height:19px;background:#727272;border-radius:50%;"></div><div class="t" style="font-size:9.4px;line-height:9.4px;color:#eeeeee;top:425.34px;letter-spacing:0.1px;left:1.45px;width:100px;text-align:center;-webkit-text-stroke:0.3px #eeeeee;">TC</div><div class="t" style="font-size:12px;line-height:12px;color:#474747;top:425.24px;letter-spacing:-0.199px;left:68.30px;">TC00000002</div><div class="t" style="font-size:12px;line-height:12px;color:#474747;top:425.24px;letter-spacing:0.338px;left:177.10px;">22/06/2023</div><div class="t" style="font-size:11.99px;line-height:11.99px;color:#474747;top:425.25px;letter-spacing:0.001px;left:249.30px;">Client par défaut</div><div class="t" style="font-size:12px;line-height:12px;color:#474747;top:425.24px;right:1129.20px;text-align:right;">9,38</div><div class="t" style="font-size:12px;line-height:12px;color:#474747;top:425.24px;right:983.20px;text-align:right;">0,00</div><div class="t" style="font-size:11.3px;line-height:11.3px;color:#474747;top:425.83px;letter-spacing:-0.167px;left:804.00px;">Principal</div><div class="r" style="left:6.50px;top:457.20px;width:9.5px;height:9.5px;background:#fff;border:1.2px solid #b5b5b5;border-radius:2px;"></div><div class="r" style="left:41.50px;top:452.70px;width:19px;height:19px;background:#727272;border-radius:50%;"></div><div class="t" style="font-size:9.4px;line-height:9.4px;color:#eeeeee;top:457.24px;letter-spacing:0.1px;left:1.45px;width:100px;text-align:center;-webkit-text-stroke:0.3px #eeeeee;">TC</div><div class="t" style="font-size:12px;line-height:12px;color:#474747;top:457.14px;letter-spacing:-0.199px;left:68.30px;">TC00000001</div><div class="t" style="font-size:12px;line-height:12px;color:#474747;top:457.14px;letter-spacing:0.338px;left:177.10px;">22/06/2023</div><div class="t" style="font-size:11.35px;line-height:11.35px;color:#474747;top:457.69px;left:249.30px;">RAVIN Odile</div><div class="t" style="font-size:12px;line-height:12px;color:#474747;top:457.14px;right:1129.20px;text-align:right;">37,62</div><div class="t" style="font-size:12px;line-height:12px;color:#474747;top:457.14px;right:983.20px;text-align:right;">0,00</div><div class="t" style="font-size:11.3px;line-height:11.3px;color:#474747;top:457.73px;letter-spacing:-0.167px;left:804.00px;">Principal</div><div class="r" style="left:6.50px;top:489.10px;width:9.5px;height:9.5px;background:#fff;border:1.2px solid #b5b5b5;border-radius:2px;"></div><div class="r" style="left:41.50px;top:484.60px;width:19px;height:19px;background:#86721a;border-radius:50%;"></div><div class="t" style="font-size:9.4px;line-height:9.4px;color:#eeeeee;top:489.14px;letter-spacing:0.1px;left:1.45px;width:100px;text-align:center;-webkit-text-stroke:0.3px #eeeeee;">FD</div><div class="t" style="font-size:12px;line-height:12px;color:#474747;top:489.04px;letter-spacing:-0.199px;left:68.30px;">FD00000002</div><div class="t" style="font-size:12px;line-height:12px;color:#474747;top:489.04px;letter-spacing:0.338px;left:177.10px;">05/05/2023</div><div class="t" style="font-size:11.38px;line-height:11.38px;color:#474747;top:489.57px;letter-spacing:-0.001px;left:249.30px;">WART ALBERT</div><div class="t" style="font-size:12px;line-height:12px;color:#474747;top:489.04px;right:1129.20px;text-align:right;">226,76</div><div class="t" style="font-size:12px;line-height:12px;color:#474747;top:489.04px;right:983.20px;text-align:right;">200,00</div><div class="t" style="font-size:12px;line-height:12px;color:#474747;top:489.04px;left:621.50px;">GBP</div><div class="t" style="font-size:11.3px;line-height:11.3px;color:#474747;top:489.63px;letter-spacing:-0.167px;left:804.00px;">Principal</div><div class="r" style="left:6.50px;top:521.00px;width:9.5px;height:9.5px;background:#fff;border:1.2px solid #b5b5b5;border-radius:2px;"></div><div class="r" style="left:41.50px;top:516.50px;width:19px;height:19px;background:#86721a;border-radius:50%;"></div><div class="t" style="font-size:9.4px;line-height:9.4px;color:#eeeeee;top:521.04px;letter-spacing:0.1px;left:1.45px;width:100px;text-align:center;-webkit-text-stroke:0.3px #eeeeee;">FD</div><div class="t" style="font-size:12px;line-height:12px;color:#474747;top:520.94px;letter-spacing:-0.199px;left:68.30px;">FD00000001</div><div class="t" style="font-size:12px;line-height:12px;color:#474747;top:520.94px;letter-spacing:0.338px;left:177.10px;">15/04/2023</div><div class="t" style="font-size:11.2px;line-height:11.2px;color:#474747;top:521.62px;letter-spacing:-0.398px;left:249.30px;">LECTURA CE</div><div class="t" style="font-size:12px;line-height:12px;color:#474747;top:520.94px;right:1129.20px;text-align:right;">300,00</div><div class="t" style="font-size:12px;line-height:12px;color:#474747;top:520.94px;right:983.20px;text-align:right;">0,00</div><div class="t" style="font-size:11.3px;line-height:11.3px;color:#474747;top:521.53px;letter-spacing:-0.167px;left:804.00px;">Principal</div><div class="r" style="left:6.50px;top:552.90px;width:9.5px;height:9.5px;background:#fff;border:1.2px solid #b5b5b5;border-radius:2px;"></div><div class="r" style="left:41.50px;top:548.40px;width:19px;height:19px;background:#3f9f40;border-radius:50%;"></div><div class="t" style="font-size:9.4px;line-height:9.4px;color:#eeeeee;top:552.94px;letter-spacing:0.1px;left:1.45px;width:100px;text-align:center;-webkit-text-stroke:0.3px #eeeeee;">FA</div><div class="t" style="font-size:12px;line-height:12px;color:#474747;top:552.84px;letter-spacing:-0.052px;left:68.30px;">FA00000009</div><div class="t" style="font-size:12px;line-height:12px;color:#474747;top:552.84px;letter-spacing:0.338px;left:177.10px;">05/08/2023</div><div class="t" style="font-size:11.2px;line-height:11.2px;color:#474747;top:553.52px;letter-spacing:-0.376px;left:249.30px;">CRECHE LES LUTINS</div><div class="t" style="font-size:12px;line-height:12px;color:#474747;top:552.84px;right:1129.20px;text-align:right;">70,19</div><div class="t" style="font-size:12px;line-height:12px;color:#474747;top:552.84px;right:983.20px;text-align:right;">0,00</div><div class="t" style="font-size:11.3px;line-height:11.3px;color:#474747;top:553.43px;letter-spacing:-0.167px;left:804.00px;">Principal</div><div class="r" style="left:6.50px;top:584.80px;width:9.5px;height:9.5px;background:#fff;border:1.2px solid #b5b5b5;border-radius:2px;"></div><div class="r" style="left:41.50px;top:580.30px;width:19px;height:19px;background:#3f9f40;border-radius:50%;"></div><div class="t" style="font-size:9.4px;line-height:9.4px;color:#eeeeee;top:584.84px;letter-spacing:0.1px;left:1.45px;width:100px;text-align:center;-webkit-text-stroke:0.3px #eeeeee;">FA</div><div class="t" style="font-size:12px;line-height:12px;color:#474747;top:584.74px;letter-spacing:-0.052px;left:68.30px;">FA00000008</div><div class="t" style="font-size:12px;line-height:12px;color:#474747;top:584.74px;letter-spacing:0.338px;left:177.10px;">05/07/2023</div><div class="t" style="font-size:11.2px;line-height:11.2px;color:#474747;top:585.42px;letter-spacing:-0.376px;left:249.30px;">CRECHE LES LUTINS</div><div class="t" style="font-size:12px;line-height:12px;color:#474747;top:584.74px;right:1129.20px;text-align:right;">70,19</div><div class="t" style="font-size:12px;line-height:12px;color:#474747;top:584.74px;right:983.20px;text-align:right;">0,00</div><div class="t" style="font-size:11.3px;line-height:11.3px;color:#474747;top:585.33px;letter-spacing:-0.167px;left:804.00px;">Principal</div><div class="r" style="left:6.50px;top:616.70px;width:9.5px;height:9.5px;background:#fff;border:1.2px solid #b5b5b5;border-radius:2px;"></div><div class="r" style="left:41.50px;top:612.20px;width:19px;height:19px;background:#3f9f40;border-radius:50%;"></div><div class="t" style="font-size:9.4px;line-height:9.4px;color:#eeeeee;top:616.74px;letter-spacing:0.1px;left:1.45px;width:100px;text-align:center;-webkit-text-stroke:0.3px #eeeeee;">FA</div><div class="t" style="font-size:12px;line-height:12px;color:#474747;top:616.64px;letter-spacing:-0.052px;left:68.30px;">FA00000007</div><div class="t" style="font-size:12px;line-height:12px;color:#474747;top:616.64px;letter-spacing:0.338px;left:177.10px;">05/06/2023</div><div class="t" style="font-size:11.2px;line-height:11.2px;color:#474747;top:617.32px;letter-spacing:-0.376px;left:249.30px;">CRECHE LES LUTINS</div><div class="t" style="font-size:12px;line-height:12px;color:#474747;top:616.64px;right:1129.20px;text-align:right;">70,19</div><div class="t" style="font-size:12px;line-height:12px;color:#474747;top:616.64px;right:983.20px;text-align:right;">0,00</div><div class="t" style="font-size:11.3px;line-height:11.3px;color:#474747;top:617.23px;letter-spacing:-0.167px;left:804.00px;">Principal</div><div class="r" style="left:6.50px;top:648.60px;width:9.5px;height:9.5px;background:#fff;border:1.2px solid #b5b5b5;border-radius:2px;"></div><div class="r" style="left:41.50px;top:644.10px;width:19px;height:19px;background:#3f9f40;border-radius:50%;"></div><div class="t" style="font-size:9.4px;line-height:9.4px;color:#eeeeee;top:648.64px;letter-spacing:0.1px;left:1.45px;width:100px;text-align:center;-webkit-text-stroke:0.3px #eeeeee;">FA</div><div class="t" style="font-size:12px;line-height:12px;color:#474747;top:648.54px;letter-spacing:-0.052px;left:68.30px;">FA00000006</div><div class="t" style="font-size:12px;line-height:12px;color:#474747;top:648.54px;letter-spacing:0.338px;left:177.10px;">27/05/2023</div><div class="t" style="font-size:11.2px;line-height:11.2px;color:#474747;top:649.22px;letter-spacing:0.001px;left:249.30px;">MAIRIE DE SAINT DENIS</div><div class="t" style="font-size:12px;line-height:12px;color:#474747;top:648.54px;right:1129.20px;text-align:right;">1 103,66</div><div class="t" style="font-size:12px;line-height:12px;color:#474747;top:648.54px;right:983.20px;text-align:right;">0,00</div><div class="t" style="font-size:11.3px;line-height:11.3px;color:#474747;top:649.13px;letter-spacing:-0.167px;left:804.00px;">Principal</div><div class="r" style="left:6.50px;top:680.50px;width:9.5px;height:9.5px;background:#fff;border:1.2px solid #b5b5b5;border-radius:2px;"></div><div class="r" style="left:41.50px;top:676.00px;width:19px;height:19px;background:#3f9f40;border-radius:50%;"></div><div class="t" style="font-size:9.4px;line-height:9.4px;color:#eeeeee;top:680.54px;letter-spacing:0.1px;left:1.45px;width:100px;text-align:center;-webkit-text-stroke:0.3px #eeeeee;">FA</div><div class="t" style="font-size:12px;line-height:12px;color:#474747;top:680.44px;letter-spacing:-0.052px;left:68.30px;">FA00000005</div><div class="t" style="font-size:12px;line-height:12px;color:#474747;top:680.44px;letter-spacing:0.338px;left:177.10px;">30/03/2023</div><div class="t" style="font-size:11.35px;line-height:11.35px;color:#474747;top:680.99px;left:249.30px;">RAVIN Odile</div><div class="t" style="font-size:12px;line-height:12px;color:#474747;top:680.44px;right:1129.20px;text-align:right;">2 148,79</div><div class="t" style="font-size:12px;line-height:12px;color:#474747;top:680.44px;right:983.20px;text-align:right;">0,00</div><div class="t" style="font-size:11.3px;line-height:11.3px;color:#474747;top:681.03px;letter-spacing:-0.167px;left:804.00px;">Principal</div><div class="r" style="left:19.90px;top:0.00px;width:1px;height:697px;background:#c8c8c8;"></div><div class="r" style="left:40.00px;top:0.00px;width:1px;height:697px;background:#ebebeb;"></div><div class="r" style="left:63.50px;top:0.00px;width:1px;height:697px;background:#ebebeb;"></div><div class="r" style="left:171.90px;top:0.00px;width:1px;height:697px;background:#ebebeb;"></div><div class="r" style="left:245.00px;top:0.00px;width:1px;height:697px;background:#ebebeb;"></div><div class="r" style="left:383.50px;top:0.00px;width:1px;height:697px;background:#ebebeb;"></div><div class="r" style="left:471.30px;top:0.00px;width:1px;height:697px;background:#ebebeb;"></div><div class="r" style="left:616.50px;top:0.00px;width:1px;height:697px;background:#ebebeb;"></div><div class="r" style="left:732.00px;top:0.00px;width:1px;height:697px;background:#ebebeb;"></div><div class="r" style="left:799.30px;top:0.00px;width:1px;height:697px;background:#ebebeb;"></div><div class="r" style="left:855.20px;top:0.00px;width:1px;height:697px;background:#ebebeb;"></div><div class="r" style="left:949.80px;top:0.00px;width:1px;height:697px;background:#ebebeb;"></div><div class="r" style="left:1028.90px;top:0.00px;width:1px;height:697px;background:#ebebeb;"></div><div class="r" style="left:1.00px;top:0.00px;width:1029px;height:31px;background:transparent;border:1px dotted #444;"></div>
</div>
<div class="r" style="left:1871px;top:308px;width:16px;height:697px;background:#e8e8e8;"></div>
<div class="r" style="left:1871px;top:325px;width:16px;height:348px;background:#cbcbcb;"></div>
<svg style="left:0;top:0" width="1" height="1"><path d="M1875.5 318 h7 l-3.5 -3.5 z" fill="#777"/><path d="M1875.5 995 h7 l-3.5 3.5 z" fill="#555"/></svg>
<div class="r" style="left:33px;top:1005px;width:1854px;height:26px;background:#eef1f5;"></div>
<div class="r" style="left:274px;top:1004.5px;width:1613px;height:1.5px;background:#cfcfcf;"></div>
<div class="r" style="left:33px;top:1030px;width:1854px;height:1px;background:#c2c2c2;"></div>
<div class="r" style="left:1347.6px;top:1008.4px;width:1px;height:18.2px;background:#c3c3c3;"></div>
<div class="r" style="left:1446.7px;top:1008.4px;width:1px;height:18.2px;background:#c3c3c3;"></div>
<div class="t" style="font-size:12px;line-height:12px;color:#333;top:1011.44px;letter-spacing:0.171px;left:1354.40px;">Sélection : 0/39</div>
<div class="t" style="font-size:12px;line-height:12px;color:#333;top:1011.44px;letter-spacing:-0.019px;left:1454.40px;">Traitements terminés</div>
<div class="t" style="font-size:12px;line-height:12px;color:#333;top:1011.44px;letter-spacing:-0.343px;left:1578.75px;">EBP Demo Gestion Commerciale FR ELITE 23.1</div>
<div class="r" style="left:1833.4px;top:1007.5px;width:46px;height:19.7px;background:#f2f4f8;border:1px solid #d3d3d3;border-radius:2px;"></div>
<div class="t" style="font-size:19px;line-height:19px;color:#0d3f8e;top:1007.12px;font-weight:bold;letter-spacing:0.364px;left:1844.30px;font-style:italic;">ebp</div>
<svg style="left:0;top:0" width="1" height="1"><path d="M1835.1 1013.4 h8.4 l-0.6 1.9 h-7.8 z" fill="#0d3f8e"/><rect x="1835.1" y="1017.6" width="7.6" height="2" fill="#f5b400"/><rect x="1835.1" y="1021" width="8" height="2.2" fill="#e8413c"/></svg>
</body></html>
